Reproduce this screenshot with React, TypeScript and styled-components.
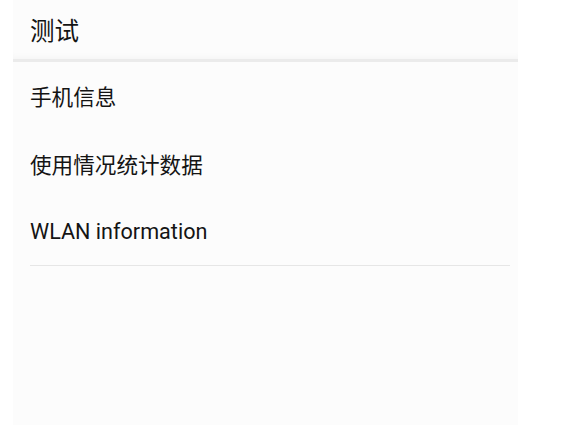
import styled, { createGlobalStyle } from "styled-components";

const GlobalStyle = createGlobalStyle`
  html, body {
    margin: 0;
    padding: 0;
    background: #ffffff;
  }
  body {
    font-family: Roboto, "Noto Sans CJK SC", sans-serif;
    color: #141414;
  }
`;

const Panel = styled.div`
  margin-left: 13px;
  width: 505px;
  height: 425px;
  background: #fcfcfc;
  display: flex;
  flex-direction: column;
`;

const Header = styled.header`
  height: 59px;
  display: flex;
  align-items: center;
  padding-left: 17px;
  font-size: 24.5px;
  border-bottom: 3px solid #ebebeb;
  box-shadow: 0 -6px 6px -4px rgba(0, 0, 0, 0.03) inset;
`;

const List = styled.ul`
  list-style: none;
  margin: 0;
  padding: 0 8px 0 17px;
`;

type RowProps = {
  $divider?: boolean;
};

const Row = styled.li<RowProps>`
  height: 67px;
  display: flex;
  align-items: center;
  font-size: 21.6px;
  border-bottom: 1px solid
    ${(p) => (p.$divider ? "#e6e6e6" : "transparent")};
`;

const items = ["手机信息", "使用情况统计数据", "WLAN information"];

const App = () => {
  return (
    <>
      <GlobalStyle />
      <Panel>
        <Header>测试</Header>
        <List>
          {items.map((label, i) => (
            <Row key={label} $divider={i === items.length - 1}>
              {label}
            </Row>
          ))}
        </List>
      </Panel>
    </>
  );
};

export default App;
